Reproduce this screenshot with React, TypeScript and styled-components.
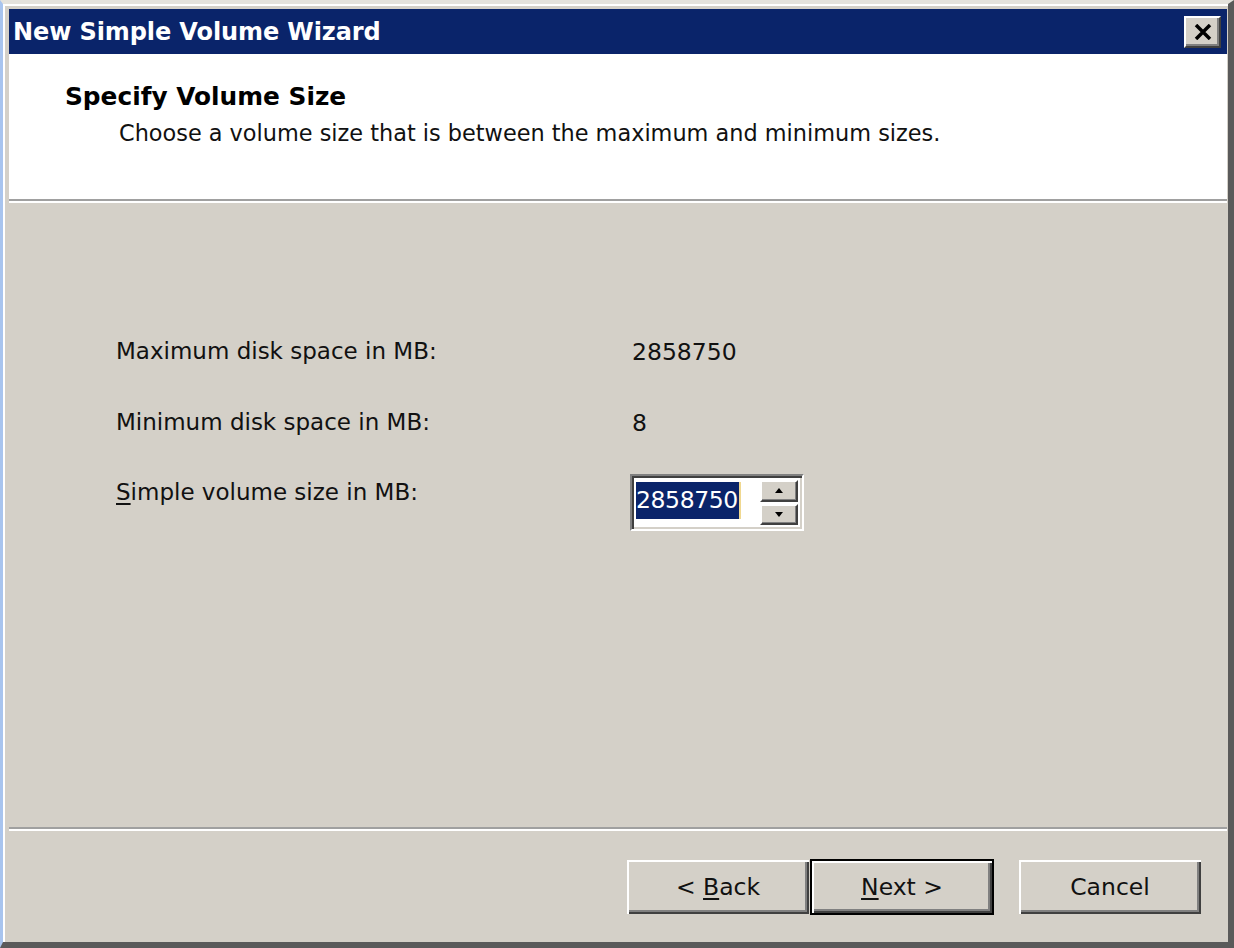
import React from 'react';
import styled, { createGlobalStyle } from 'styled-components';

const GlobalStyle = createGlobalStyle`
  html, body {
    margin: 0;
    padding: 0;
    background: #d4d0c8;
  }
  body {
    font-family: "DejaVu Sans", Tahoma, sans-serif;
  }
`;

const Frame = styled.div`
  box-sizing: border-box;
  width: 1234px;
  height: 948px;
  display: flex;
  flex-direction: column;
  background: #d4d0c8;
  border-top: 4px solid #e4e2dc;
  border-left: 3px solid #a8c4ee;
  border-right: 6px solid #5a5a5a;
  border-bottom: 6px solid #5a5a5a;
  padding: 5px 1px 0 6px;
  box-shadow: inset 2px 2px 0 #ffffff;
`;

const TitleBar = styled.div`
  height: 45px;
  flex: none;
  display: flex;
  align-items: center;
  justify-content: space-between;
  background: #0a246a;
  padding: 0 6px 0 4px;
`;

const TitleText = styled.div`
  color: #ffffff;
  font-weight: bold;
  font-size: 24px;
  letter-spacing: -0.1px;
`;

const CloseButton = styled.div`
  box-sizing: border-box;
  width: 37px;
  height: 32px;
  background: #d4d0c8;
  border-top: 2px solid #ffffff;
  border-left: 2px solid #ffffff;
  border-right: 2px solid #404040;
  border-bottom: 2px solid #404040;
  box-shadow: inset -2px -2px 0 #808080;
  display: flex;
  align-items: center;
  justify-content: center;
`;

const Header = styled.div`
  flex: none;
  height: 145px;
  background: #ffffff;
  padding: 28px 0 0 56px;
  box-sizing: border-box;
`;

const HeaderTitle = styled.div`
  font-weight: bold;
  font-size: 24.8px;
  color: #000;
`;

const HeaderSub = styled.div`
  font-size: 22.4px;
  color: #111;
  margin: 9px 0 0 54px;
`;

const Separator = styled.div`
  flex: none;
  height: 2px;
  background: #a0a0a0;
  border-bottom: 2px solid #ffffff;
`;

const Body = styled.div`
  flex: 1;
  padding: 135px 0 0 107px;
  display: grid;
  grid-template-columns: 516px auto;
  grid-template-rows: 71px 70px 70px;
  align-content: start;
`;

const Label = styled.div`
  font-size: 23px;
  color: #111;
  display: flex;
  align-items: flex-start;
`;

const Value = styled(Label)`
  font-size: 23.5px;
`;

const Underline = styled.span`
  text-decoration: underline;
  text-underline-offset: 3px;
`;

const Spinner = styled.div`
  box-sizing: border-box;
  width: 174px;
  height: 57px;
  margin: -5px 0 0 -2px;
  border-top: 2px solid #808080;
  border-left: 2px solid #808080;
  border-right: 2px solid #ffffff;
  border-bottom: 2px solid #ffffff;
  background: #ffffff;
  box-shadow: inset 2px 2px 0 #404040, inset -2px -2px 0 #d4d0c8;
  display: flex;
  padding: 4px;
  gap: 2px;
`;

const SpinInput = styled.div`
  flex: 1;
  display: flex;
  align-items: flex-start;
  padding-top: 2px;
`;

const Selected = styled.span`
  background: #0a246a;
  color: #ffffff;
  font-size: 23.5px;
  line-height: 37px;
  letter-spacing: -0.4px;
  padding: 0 1px 0 0;
  border-right: 2px solid #f0d890;
`;

const SpinButtons = styled.div`
  width: 38px;
  display: flex;
  flex-direction: column;
  gap: 2px;
`;

const SpinButton = styled.div`
  flex: 1;
  box-sizing: border-box;
  background: #d4d0c8;
  border-top: 2px solid #ffffff;
  border-left: 2px solid #ffffff;
  border-right: 2px solid #404040;
  border-bottom: 2px solid #404040;
  box-shadow: inset -1px -1px 0 #808080;
  display: flex;
  align-items: center;
  justify-content: center;
`;

const Footer = styled.div`
  flex: none;
  height: 111px;
  display: flex;
  justify-content: flex-end;
  align-items: flex-start;
  padding: 29px 26px 0 0;
  box-sizing: border-box;
`;

const ButtonGroup = styled.div`
  display: flex;
  gap: 1px;
  margin-right: 25px;
`;

const Button = styled.div<{ $default?: boolean }>`
  box-sizing: border-box;
  width: ${(p) => (p.$default ? '184px' : '182px')};
  height: ${(p) => (p.$default ? '56px' : '54px')};
  margin-top: ${(p) => (p.$default ? '-1px' : '0')};
  background: #d4d0c8;
  border: ${(p) => (p.$default ? '2px solid #000' : 'none')};
  display: flex;
  align-items: center;
  justify-content: center;
  font-size: 23.5px;
  color: #111;
  box-shadow: inset 2px 2px 0 #ffffff, inset -2px -2px 0 #404040,
    inset -4px -4px 0 #808080;
`;

const Arrow = ({ up }: { up?: boolean }) => (
  <svg width="8" height="5" viewBox="0 0 8 5">
    <path d={up ? 'M4 0 L8 5 L0 5 Z' : 'M0 0 L8 0 L4 5 Z'} fill="#000" />
  </svg>
);

const App: React.FC = () => {
  return (
    <>
      <GlobalStyle />
      <Frame>
        <TitleBar>
          <TitleText>New Simple Volume Wizard</TitleText>
          <CloseButton>
            <svg width="18" height="16" viewBox="0 0 18 16">
              <path d="M2 1 L16 15 M16 1 L2 15" stroke="#000" strokeWidth="3.5" />
            </svg>
          </CloseButton>
        </TitleBar>
        <Header>
          <HeaderTitle>Specify Volume Size</HeaderTitle>
          <HeaderSub>Choose a volume size that is between the maximum and minimum sizes.</HeaderSub>
        </Header>
        <Separator />
        <Body>
          <Label>Maximum disk space in MB:</Label>
          <Value>2858750</Value>
          <Label>Minimum disk space in MB:</Label>
          <Value>8</Value>
          <Label>
            <span>
              <Underline>S</Underline>imple volume size in MB:
            </span>
          </Label>
          <Spinner>
            <SpinInput>
              <Selected>2858750</Selected>
            </SpinInput>
            <SpinButtons>
              <SpinButton>
                <Arrow up />
              </SpinButton>
              <SpinButton>
                <Arrow />
              </SpinButton>
            </SpinButtons>
          </Spinner>
        </Body>
        <Separator />
        <Footer>
          <ButtonGroup>
            <Button>
              &lt;&nbsp;<Underline>B</Underline>ack
            </Button>
            <Button $default>
              <Underline>N</Underline>ext &gt;
            </Button>
          </ButtonGroup>
          <Button>Cancel</Button>
        </Footer>
      </Frame>
    </>
  );
};

export default App;
